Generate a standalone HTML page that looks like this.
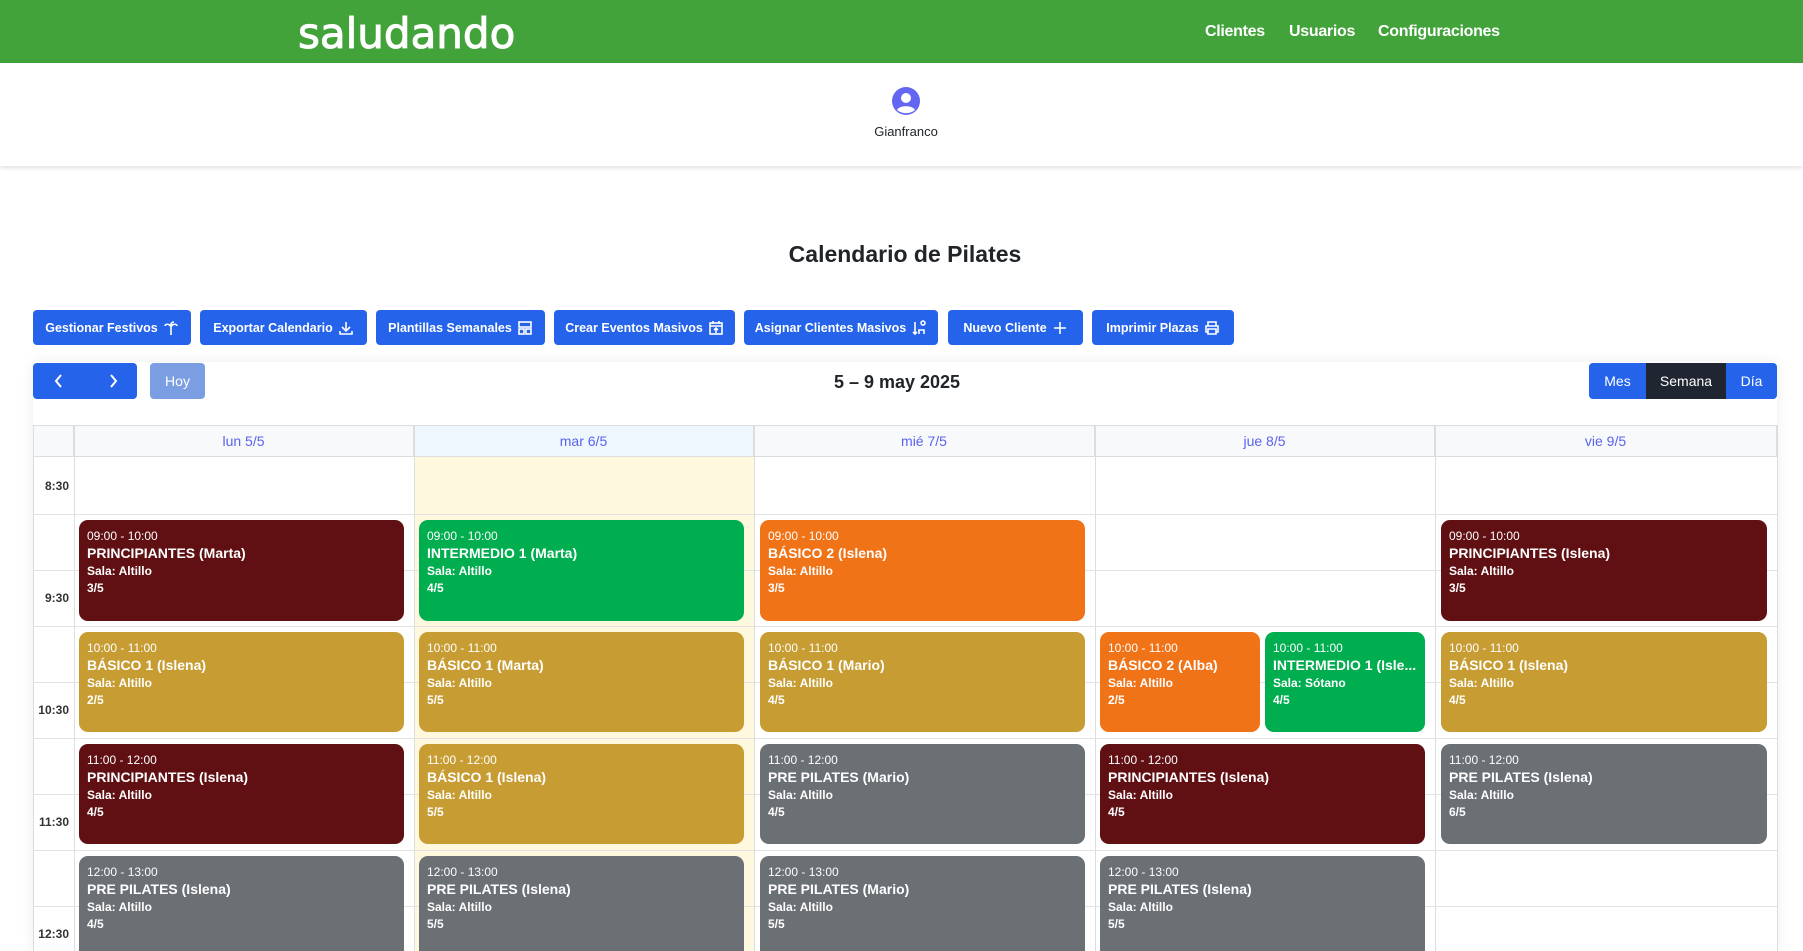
<!DOCTYPE html>
<html><head><meta charset="utf-8"><style>
*{box-sizing:border-box;margin:0;padding:0}
html,body{width:1803px;height:951px;overflow:hidden}
body{background:#fff;font-family:"Liberation Sans",sans-serif;position:relative;color:#212529}
.a{position:absolute}
.nav{left:0;top:0;width:1803px;height:63px;background:#42a33a}
.logo{left:298px;top:9px;font-family:"DejaVu Sans",sans-serif;font-size:42px;color:#fff;-webkit-text-stroke:1px #fff;letter-spacing:0px}
.nl{top:23px;color:#fff;font-weight:bold;font-size:16px;letter-spacing:-0.3px}
.hdr{left:0;top:63px;width:1803px;height:103px;background:#fff;box-shadow:0 2px 4px rgba(0,0,0,.12)}
.btn{top:310px;height:35px;background:#2563eb;color:#fff;font-weight:bold;font-size:12.5px;border-radius:4px;display:flex;align-items:center;justify-content:center;gap:5px;white-space:nowrap}
.btn svg{width:16px;height:16px;fill:none;stroke:#fff;stroke-width:1.6}
.cal{left:33px;top:362px;width:1744px;height:589px;background:#fff;box-shadow:0 0 12px rgba(0,0,0,.08)}
.hd{top:425px;height:32px;border:1px solid #ddd;border-left:none;background:#f8f9fa;color:#5b62ec;font-size:14px;text-align:center;line-height:31px}
.vl{top:425px;width:1px;height:526px;background:#ddd}
.hl{left:33px;width:1744px;height:1px;background:#e2e2e2}
.tl{left:33px;width:36px;text-align:right;font-size:12px;font-weight:bold;color:#333}
.ev{border-radius:9px;color:#fff;padding:0 8px;overflow:hidden;white-space:nowrap}
.ev .t{font-size:12px;margin-top:8px;line-height:16px}
.ev .n{font-size:14px;font-weight:bold;line-height:19px}
.ev .s{font-size:12px;font-weight:bold;line-height:17px}
.r{background:#600f13}.g{background:#00ad4f}.o{background:#f07318}.y{background:#c69c33}.gr{background:#6b7075}
.b{border-bottom-left-radius:0;border-bottom-right-radius:0}
</style></head><body>
<div class="a nav"></div>
<div class="a logo">saludando</div>
<div class="a nl" style="left:1205px">Clientes</div>
<div class="a nl" style="left:1289px">Usuarios</div>
<div class="a nl" style="left:1378px">Configuraciones</div>
<div class="a hdr"></div>
<svg class="a" style="left:892px;top:87px" width="28" height="28" viewBox="0 0 28 28"><circle cx="14" cy="14" r="14" fill="#6366f1"/><circle cx="14" cy="11" r="5" fill="#fff"/><path d="M5 23c2-5 16-5 18 0a14 14 0 0 1-18 0z" fill="#fff"/></svg>
<div class="a" style="left:856px;top:124px;width:100px;text-align:center;font-size:13px">Gianfranco</div>
<div class="a" style="left:700px;top:241px;width:410px;text-align:center;font-size:23px;font-weight:bold">Calendario de Pilates</div>

<div class="a btn" style="left:33px;width:158px">Gestionar Festivos <svg viewBox="0 0 16 16"><path d="M8 7v8M8 7C6 3 2 4 2 6M8 7c2-4 6-3 6-1M8 7C7 4 9 2 11 2"/></svg></div>
<div class="a btn" style="left:200px;width:167px">Exportar Calendario <svg viewBox="0 0 16 16"><path d="M8 2v9M4 7l4 4 4-4M2 11v3h12v-3"/></svg></div>
<div class="a btn" style="left:376px;width:169px">Plantillas Semanales <svg viewBox="0 0 16 16"><rect x="2" y="2" width="12" height="5"/><rect x="2" y="9" width="5" height="5"/><rect x="9" y="9" width="5" height="5"/></svg></div>
<div class="a btn" style="left:554px;width:181px">Crear Eventos Masivos <svg viewBox="0 0 16 16"><rect x="2" y="3" width="12" height="11"/><path d="M2 6h12M5 1v3M11 1v3M8 8v5M6 10l2-2 2 2"/></svg></div>
<div class="a btn" style="left:744px;width:194px">Asignar Clientes Masivos <svg viewBox="0 0 16 16"><path d="M4 2v12M2 12l2 2 2-2M10 3a2 2 0 1 1 0 .1M8 14v-4h5v4"/></svg></div>
<div class="a btn" style="left:948px;width:135px">Nuevo Cliente <svg viewBox="0 0 16 16"><path d="M8 2v12M2 8h12"/></svg></div>
<div class="a btn" style="left:1092px;width:142px">Imprimir Plazas <svg viewBox="0 0 16 16"><path d="M4 6V2h8v4M4 12H2V6h12v6h-2M4 9h8v5H4z"/></svg></div>

<div class="a cal"></div>
<div class="a" style="left:33px;top:363px;width:104px;height:36px;background:#2563eb;border-radius:4px"></div>
<svg class="a" style="left:52px;top:373px" width="70" height="16" viewBox="0 0 70 16" fill="none" stroke="#fff" stroke-width="2"><path d="M9 2L4 8l5 6M59 2l5 6-5 6"/></svg>
<div class="a" style="left:150px;top:363px;width:55px;height:36px;background:#7b9ee3;border-radius:4px;color:#fff;font-size:14px;text-align:center;line-height:36px">Hoy</div>
<div class="a" style="left:750px;top:372px;width:294px;text-align:center;font-size:18px;font-weight:bold">5 – 9 may 2025</div>
<div class="a" style="left:1589px;top:363px;width:188px;height:36px;background:#2563eb;border-radius:4px"></div>
<div class="a" style="left:1646px;top:363px;width:80px;height:36px;background:#1f2531;color:#fff;font-size:14px;text-align:center;line-height:36px">Semana</div>
<div class="a" style="left:1589px;top:363px;width:57px;color:#fff;font-size:14px;text-align:center;line-height:36px">Mes</div>
<div class="a" style="left:1726px;top:363px;width:51px;color:#fff;font-size:14px;text-align:center;line-height:36px">Día</div>

<div class="a" style="left:414px;top:457px;width:340px;height:494px;background:#fef9de"></div>
<div class="a hd" style="left:33px;width:41px;border-left:1px solid #ddd"></div>
<div class="a hd" style="left:74px;width:340px">lun 5/5</div>
<div class="a hd" style="left:414px;width:340px;background:#eef6fe">mar 6/5</div>
<div class="a hd" style="left:754px;width:341px">mié 7/5</div>
<div class="a hd" style="left:1095px;width:340px">jue 8/5</div>
<div class="a hd" style="left:1435px;width:342px">vie 9/5</div>
<div class="a vl" style="left:33px"></div><div class="a vl" style="left:74px"></div><div class="a vl" style="left:414px"></div><div class="a vl" style="left:754px"></div><div class="a vl" style="left:1095px"></div><div class="a vl" style="left:1435px"></div><div class="a vl" style="left:1777px"></div>
<div class="a hl" style="top:514px"></div><div class="a hl" style="top:570px"></div><div class="a hl" style="top:626px"></div><div class="a hl" style="top:682px"></div><div class="a hl" style="top:738px"></div><div class="a hl" style="top:794px"></div><div class="a hl" style="top:850px"></div><div class="a hl" style="top:906px"></div>
<div class="a tl" style="top:479px">8:30</div>
<div class="a tl" style="top:591px">9:30</div>
<div class="a tl" style="top:703px">10:30</div>
<div class="a tl" style="top:815px">11:30</div>
<div class="a tl" style="top:927px">12:30</div>

<div class="a ev r" style="left:79px;top:520px;width:325px;height:101px"><div class="t">09:00 - 10:00</div><div class="n">PRINCIPIANTES (Marta)</div><div class="s">Sala: Altillo</div><div class="s">3/5</div></div>
<div class="a ev g" style="left:419px;top:520px;width:325px;height:101px"><div class="t">09:00 - 10:00</div><div class="n">INTERMEDIO 1 (Marta)</div><div class="s">Sala: Altillo</div><div class="s">4/5</div></div>
<div class="a ev o" style="left:760px;top:520px;width:325px;height:101px"><div class="t">09:00 - 10:00</div><div class="n">BÁSICO 2 (Islena)</div><div class="s">Sala: Altillo</div><div class="s">3/5</div></div>
<div class="a ev r" style="left:1441px;top:520px;width:326px;height:101px"><div class="t">09:00 - 10:00</div><div class="n">PRINCIPIANTES (Islena)</div><div class="s">Sala: Altillo</div><div class="s">3/5</div></div>

<div class="a ev y" style="left:79px;top:632px;width:325px;height:100px"><div class="t">10:00 - 11:00</div><div class="n">BÁSICO 1 (Islena)</div><div class="s">Sala: Altillo</div><div class="s">2/5</div></div>
<div class="a ev y" style="left:419px;top:632px;width:325px;height:100px"><div class="t">10:00 - 11:00</div><div class="n">BÁSICO 1 (Marta)</div><div class="s">Sala: Altillo</div><div class="s">5/5</div></div>
<div class="a ev y" style="left:760px;top:632px;width:325px;height:100px"><div class="t">10:00 - 11:00</div><div class="n">BÁSICO 1 (Mario)</div><div class="s">Sala: Altillo</div><div class="s">4/5</div></div>
<div class="a ev o" style="left:1100px;top:632px;width:160px;height:100px"><div class="t">10:00 - 11:00</div><div class="n">BÁSICO 2 (Alba)</div><div class="s">Sala: Altillo</div><div class="s">2/5</div></div>
<div class="a ev g" style="left:1265px;top:632px;width:160px;height:100px"><div class="t">10:00 - 11:00</div><div class="n">INTERMEDIO 1 (Isle...</div><div class="s">Sala: Sótano</div><div class="s">4/5</div></div>
<div class="a ev y" style="left:1441px;top:632px;width:326px;height:100px"><div class="t">10:00 - 11:00</div><div class="n">BÁSICO 1 (Islena)</div><div class="s">Sala: Altillo</div><div class="s">4/5</div></div>

<div class="a ev r" style="left:79px;top:744px;width:325px;height:100px"><div class="t">11:00 - 12:00</div><div class="n">PRINCIPIANTES (Islena)</div><div class="s">Sala: Altillo</div><div class="s">4/5</div></div>
<div class="a ev y" style="left:419px;top:744px;width:325px;height:100px"><div class="t">11:00 - 12:00</div><div class="n">BÁSICO 1 (Islena)</div><div class="s">Sala: Altillo</div><div class="s">5/5</div></div>
<div class="a ev gr" style="left:760px;top:744px;width:325px;height:100px"><div class="t">11:00 - 12:00</div><div class="n">PRE PILATES (Mario)</div><div class="s">Sala: Altillo</div><div class="s">4/5</div></div>
<div class="a ev r" style="left:1100px;top:744px;width:325px;height:100px"><div class="t">11:00 - 12:00</div><div class="n">PRINCIPIANTES (Islena)</div><div class="s">Sala: Altillo</div><div class="s">4/5</div></div>
<div class="a ev gr" style="left:1441px;top:744px;width:326px;height:100px"><div class="t">11:00 - 12:00</div><div class="n">PRE PILATES (Islena)</div><div class="s">Sala: Altillo</div><div class="s">6/5</div></div>

<div class="a ev gr b" style="left:79px;top:856px;width:325px;height:95px"><div class="t">12:00 - 13:00</div><div class="n">PRE PILATES (Islena)</div><div class="s">Sala: Altillo</div><div class="s">4/5</div></div>
<div class="a ev gr b" style="left:419px;top:856px;width:325px;height:95px"><div class="t">12:00 - 13:00</div><div class="n">PRE PILATES (Islena)</div><div class="s">Sala: Altillo</div><div class="s">5/5</div></div>
<div class="a ev gr b" style="left:760px;top:856px;width:325px;height:95px"><div class="t">12:00 - 13:00</div><div class="n">PRE PILATES (Mario)</div><div class="s">Sala: Altillo</div><div class="s">5/5</div></div>
<div class="a ev gr b" style="left:1100px;top:856px;width:325px;height:95px"><div class="t">12:00 - 13:00</div><div class="n">PRE PILATES (Islena)</div><div class="s">Sala: Altillo</div><div class="s">5/5</div></div>
</body></html>
